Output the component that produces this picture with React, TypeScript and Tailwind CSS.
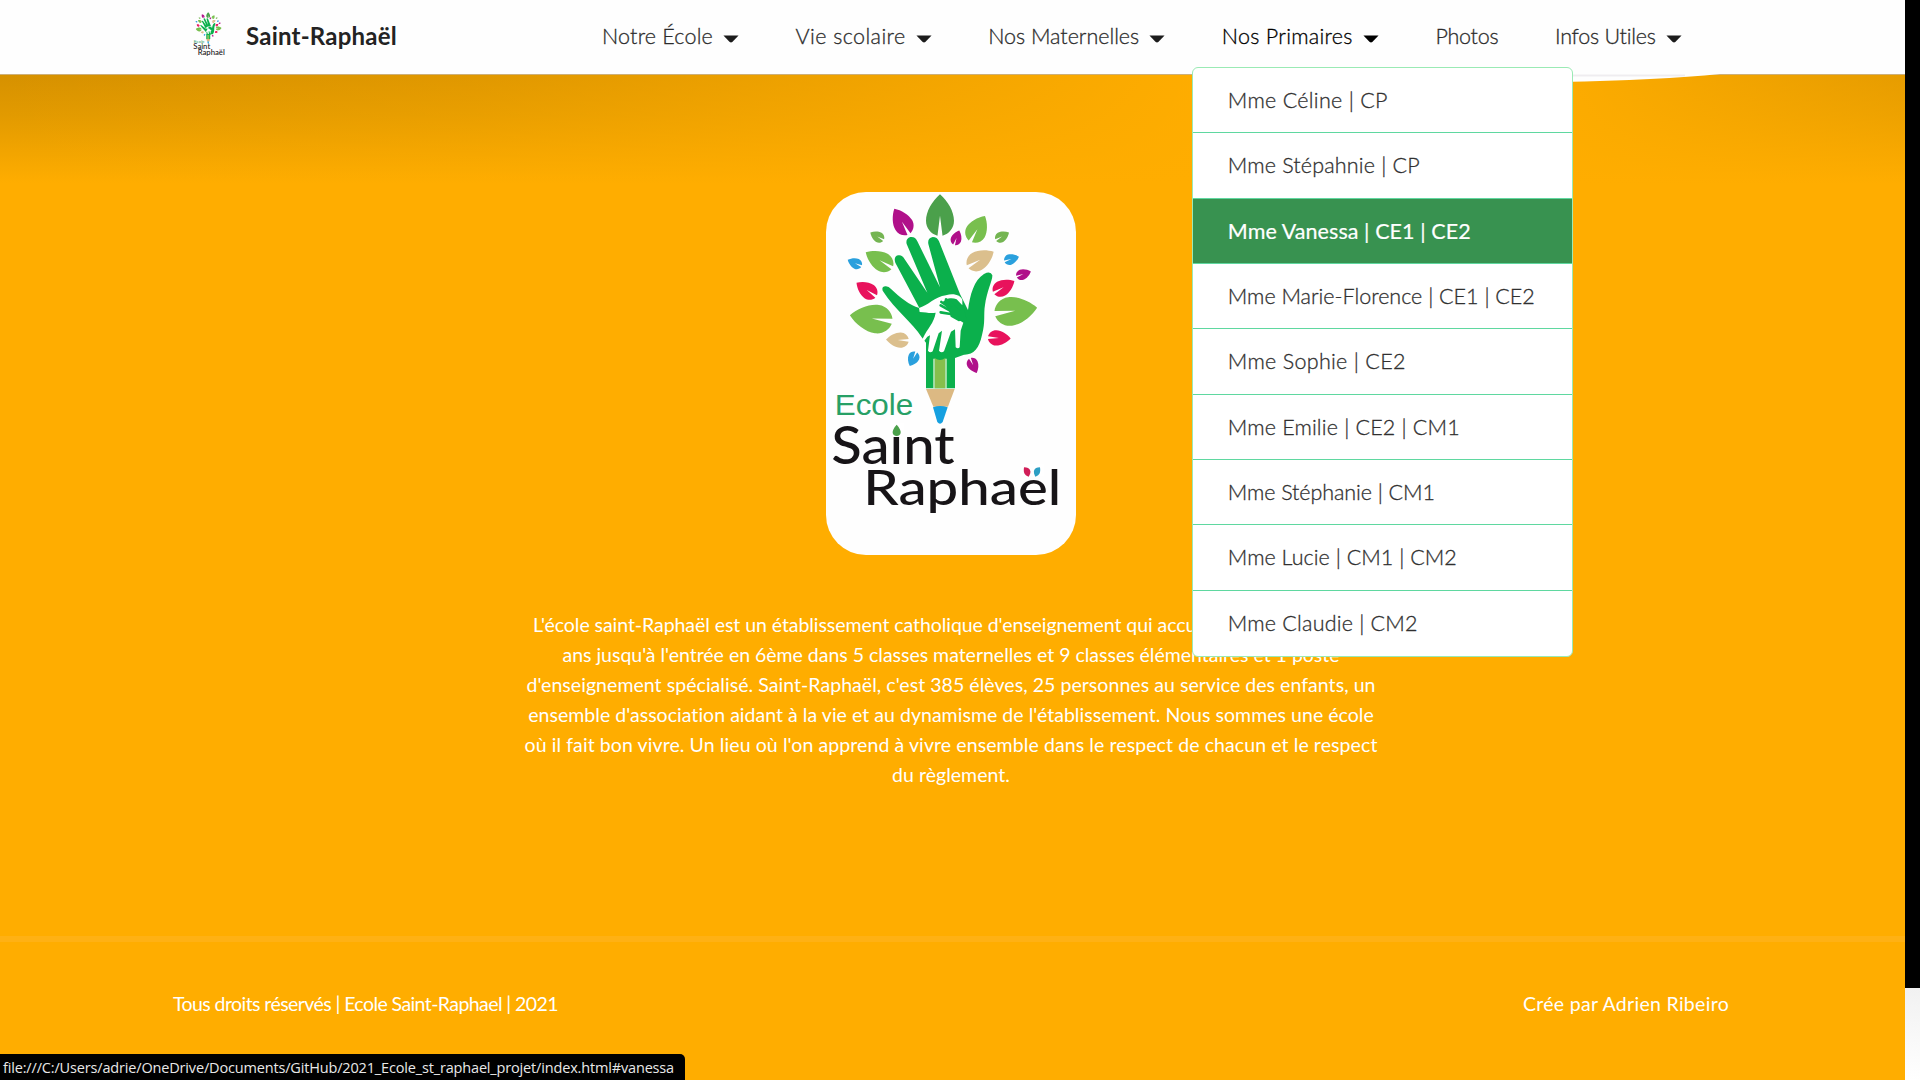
import { useLayoutEffect, useRef, useState } from "react";

type FitProps = { text: string; width: number; className?: string };

/* One line of text whose tracking is tuned so that it spans a given width. */
function Fit({ text, width, className = "" }: FitProps) {
  const ref = useRef<HTMLSpanElement>(null);
  const [spacing, setSpacing] = useState(0);
  useLayoutEffect(() => {
    if (!ref.current) return;
    const natural = ref.current.getBoundingClientRect().width;
    setSpacing((width - natural) / text.length);
  }, [text, width]);
  return (
    <span
      ref={ref}
      className={`inline-block whitespace-pre ${className}`}
      style={{ letterSpacing: `${spacing}px` }}
    >
      {text}
    </span>
  );
}

type Leaf = [number, number, number, number, number, string];

const leaves: Leaf[] = [
  [360, 105, 124, 84, 0, "#4ba04b"],
  [245, 124, 88, 58, -30, "#b0108a"],
  [473, 146, 88, 62, 30, "#78bf4e"],
  [410, 173, 46, 32, 20, "#b0108a"],
  [171, 169, 46, 32, -60, "#74b552"],
  [547, 169, 46, 32, 60, "#74b552"],
  [177, 240, 92, 58, -60, "#78bf4e"],
  [482, 238, 90, 58, 60, "#dbbf8d"],
  [104, 249, 46, 32, -65, "#2aa0dd"],
  [575, 237, 46, 32, 72, "#2aa0dd"],
  [611, 282, 46, 32, 70, "#b0108a"],
  [139, 329, 72, 48, -55, "#e8125c"],
  [552, 321, 72, 48, 60, "#e8125c"],
  [153, 415, 128, 86, -82, "#78bf4e"],
  [588, 392, 128, 86, 82, "#78bf4e"],
  [232, 480, 68, 46, -88, "#dbbf8d"],
  [538, 474, 68, 46, 92, "#e8125c"],
  [279, 537, 46, 34, 205, "#2aa0dd"],
  [460, 557, 48, 34, 155, "#b0108a"],
];

function SchoolLogo({ className, viewBox }: { className: string; viewBox: string }) {
  return (
    <svg className={className} viewBox={viewBox}>
      <g transform="translate(-6 -12) scale(0.33333)">
        {leaves.map(([x, y, len, wid, angle, color]) => (
          <path
            key={`${x}-${y}`}
            transform={`translate(${x} ${y}) rotate(${angle}) scale(${wid / 100} ${len / 100})`}
            d="M0-50C28-34 50-8 50 14C50 32 32 46 9 50L0 2L-9 50C-32 46-50 32-50 14C-50-8-28-34 0-50Z"
            fill={color}
          />
        ))}
        <path
          d="M188 332Q184 318 198 319Q206 319 214 328C240 352 268 376 298 384L226 248Q220 230 234 226Q246 223 253 236L322 338L260 192Q256 176 271 171Q286 169 292 184L360 322L325 192Q322 174 338 171Q352 171 357 184L420 342L444 390C450 345 462 300 492 282Q512 272 517 286C518 300 500 335 495 375C490 405 497 425 486 465C478 505 460 525 432 524L405 534V625H318V488L304 470C280 430 225 390 188 332Z"
          fill="#0bb04c"
        />
        <path
          d="M297 384C322 378 345 350 378 346C400 338 424 346 427 360V376L410 358C392 350 372 358 368 368L402 410L430 428L422 452L419 502Q414 508 407 502L405 448L393 455L372 514Q364 520 357 512L366 452L356 460L338 514Q330 520 324 512L330 466L322 470L312 484Q304 484 309 474C322 445 342 430 347 398C330 402 318 396 299 396Z"
          fill="#fff"
        />
        <path
          d="M362 376L390 392M364 366L398 388M378 358L408 384M362 397L392 402"
          stroke="#0bb04c"
          strokeWidth="8"
          strokeLinecap="round"
        />
        <path d="M386 388L402 376L420 392L430 376L440 420L416 424L392 410Z" fill="#0bb04c" />
        <path d="M344 534Q360 546 376 534V625H344Z" fill="#86bf4c" />
        <path d="M342 536V625M378 536V625" stroke="#dff2d0" strokeWidth="4" />
        <path d="M318 627H404L384 680H340Z" fill="#dcb983" />
        <path d="M339 682Q360 674 383 682L368 726Q360 736 352 726Z" fill="#16a0e0" />
        <text
          x="44"
          y="705"
          textLength="236"
          lengthAdjust="spacingAndGlyphs"
          className="fill-[#27a066] font-['Liberation_Sans',sans-serif] text-[91px]"
        >
          Ecole
        </text>
        <g className="fill-[#171417] font-['Lato',sans-serif] font-medium">
          <text x="34" y="851" textLength="370" lengthAdjust="spacingAndGlyphs" className="text-[158px]">
            Saint
          </text>
          <text x="130" y="974" textLength="594" lengthAdjust="spacingAndGlyphs" className="text-[146px]">
            Raphaël
          </text>
        </g>
        <rect x="210" y="728" width="42" height="32" fill="#fff" />
        <path d="M230 734C248 754 244 766 230 768C216 766 212 754 230 734Z" fill="#4ba04b" />
        <rect x="604" y="852" width="68" height="36" fill="#fff" />
        <path d="M612 862C632 862 636 876 626 890C612 886 610 876 612 862Z" fill="#d11e58" />
        <path d="M660 862C640 862 638 876 646 890C660 886 662 876 660 862Z" fill="#2d9fc4" />
      </g>
    </svg>
  );
}

function Caret({ dark = false }: { dark?: boolean }) {
  return (
    <svg className="mt-[5px] ml-[10px] h-[8px] w-[16px]" viewBox="0 0 17 9">
      <path d="M0 .5H17L10 8Q8.500 9 7 8Z" fill={dark ? "#000" : "#1c1c1c"} />
    </svg>
  );
}

const teachers = [
  { text: "Mme Céline | CP", width: 160 },
  { text: "Mme Stépahnie | CP", width: 192 },
  { text: "Mme Vanessa | CE1 | CE2", width: 243, active: true },
  { text: "Mme Marie-Florence | CE1 | CE2", width: 307 },
  { text: "Mme Sophie | CE2", width: 178 },
  { text: "Mme Emilie | CE2 | CM1", width: 232 },
  { text: "Mme Stéphanie | CM1", width: 207 },
  { text: "Mme Lucie | CM1 | CM2", width: 229 },
  { text: "Mme Claudie | CM2", width: 190 },
];

function TeacherMenu() {
  return (
    <ul className="absolute top-[47px] -left-[30px] z-20 grid h-[590px] w-[381px] grid-rows-9 divide-y divide-[#5fd8a0] overflow-hidden rounded-md border border-[#9aeab4] bg-white text-[#303030]">
      {teachers.map((t) => (
        <li
          key={t.text}
          className={
            t.active
              ? "flex items-center bg-[#389250] pl-[35px] font-normal text-white [-webkit-text-stroke:0.2px_white]"
              : "flex items-center pl-[35px] [-webkit-text-stroke:0.3px_#303030]"
          }
        >
          <Fit text={t.text} width={t.width} />
        </li>
      ))}
    </ul>
  );
}

const nav = [
  { text: "Notre École", width: 111, menu: true },
  { text: "Vie scolaire", width: 110, menu: true },
  { text: "Nos Maternelles", width: 151, menu: true },
  { text: "Nos Primaires", width: 131, menu: true, open: true },
  { text: "Photos", width: 63, menu: false },
  { text: "Infos Utiles", width: 101, menu: true },
];

const intro = [
  { text: "L'école saint-Raphaël est un établissement catholique d'enseignement qui accueille les enfants de 2", width: 836 },
  { text: "ans jusqu'à l'entrée en 6ème dans 5 classes maternelles et 9 classes élémentaires et 1 poste", width: 777 },
  { text: "d'enseignement spécialisé. Saint-Raphaël, c'est 385 élèves, 25 personnes au service des enfants, un", width: 849 },
  { text: "ensemble d'association aidant à la vie et au dynamisme de l'établissement. Nous sommes une école", width: 846 },
  { text: "où il fait bon vivre. Un lieu où l'on apprend à vivre ensemble dans le respect de chacun et le respect", width: 853 },
  { text: "du règlement.", width: 118 },
];

export default function App() {
  return (
    <div className="flex h-[1080px] w-[1920px] overflow-hidden bg-white font-['Lato',sans-serif]">
      <div className="relative flex w-[1905px] flex-col bg-[#ffad00]">
        <header className="relative z-10 flex h-[75px] items-center border-b border-[#cdb078] bg-[#fefefe] pb-[2px] pl-[193px]">
          <SchoolLogo className="-mt-0.5 h-[46px] w-[32px]" viewBox="5 0 230 335" />
          <Fit
            text="Saint-Raphaël"
            width={151}
            className="ml-[21px] text-[24px] leading-none font-bold text-[#232323]"
          />
          <nav className="ml-[205px] flex items-center gap-[56.600px] text-[21.500px] leading-8 font-light text-[#2c2c2c] [-webkit-text-stroke:0.3px_currentColor]">
            {nav.map((item) => (
              <div
                key={item.text}
                className={item.open ? "relative flex items-center text-black" : "relative flex items-center"}
              >
                <Fit text={item.text} width={item.width} />
                {item.menu && <Caret dark={item.open} />}
                {item.open && <TeacherMenu />}
              </div>
            ))}
          </nav>
          <svg className="absolute top-[74px] left-[1560px] h-[9px] w-[170px]" viewBox="0 0 170 9">
            <path d="M0 0H160Q100 6 0 8Z" fill="#fefefe" />
            <path d="M0 1.500H125" stroke="#efedf0" strokeWidth="2" />
          </svg>
        </header>

        <main className="flex h-[861px] flex-col items-center bg-[linear-gradient(to_right,rgba(255,173,0,0)_0%,rgba(255,173,0,0.25)_25%,#ffad00_64%,#ffad00_80%,rgba(255,173,0,0.4)_100%),linear-gradient(to_bottom,#d69100_0px,#e29a00_40px,#ffad00_108px)] pt-[117px] pr-[3px]">
          <div className="h-[363px] w-[250px] overflow-hidden rounded-[40px] bg-[#fefefe]">
            <SchoolLogo className="h-[363px] w-[250px]" viewBox="0 0 250 363" />
          </div>
          <div className="mt-[55px] flex flex-col items-center text-[19.500px] leading-[30.100px] text-white">
            {intro.map((line) => (
              <Fit key={line.text} text={line.text} width={line.width} />
            ))}
          </div>
        </main>

        <footer className="flex flex-1 justify-between border-t-[6px] border-[#ffb114] pt-[46px] pr-[176px] pl-[173px] text-[19.500px] leading-8 text-white">
          <Fit text="Tous droits réservés | Ecole Saint-Raphael | 2021" width={385} />
          <Fit text="Crée par Adrien Ribeiro" width={206} />
        </footer>

        <div className="absolute bottom-0 left-0 flex h-[26px] w-[685px] items-center rounded-tr-[5px] bg-black pt-[2px] pl-[3px] font-['Open_Sans',sans-serif] text-[14.500px] text-[#e8e8e8]">
          <Fit
            text="file:///C:/Users/adrie/OneDrive/Documents/GitHub/2021_Ecole_st_raphael_projet/index.html#vanessa"
            width={671}
          />
        </div>
      </div>
      <aside className="flex w-[15px] flex-col">
        <div className="h-[988px] bg-black" />
        <div className="flex-1 bg-linear-to-b from-[#f1f1f1] to-white" />
      </aside>
    </div>
  );
}
